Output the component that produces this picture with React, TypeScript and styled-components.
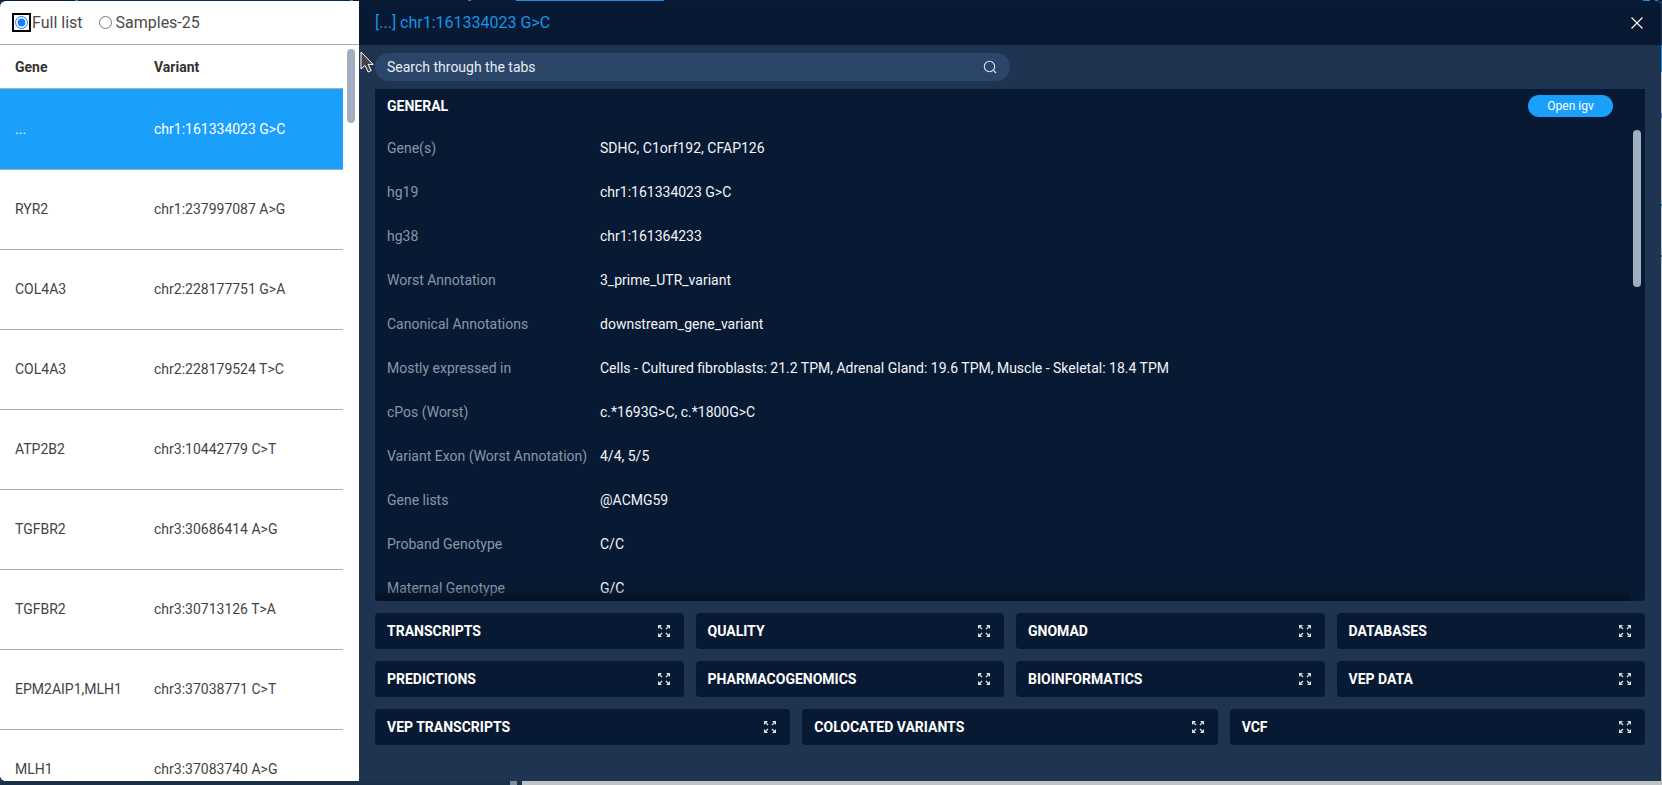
import React from "react";
import styled, { createGlobalStyle } from "styled-components";

const Global = createGlobalStyle`
  html, body { margin: 0; padding: 0; height: 100%; overflow: hidden; }
  body { font-family: Roboto, "Liberation Sans", sans-serif; font-size: 14px; background: #1f3450; }
  * { box-sizing: border-box; }
`;

const Page = styled.div`
  width: 1662px;
  height: 785px;
  display: flex;
  flex-direction: column;
  overflow: hidden;
  position: relative;
`;

const TopStrip = styled.div`
  height: 1px;
  flex: none;
  background: linear-gradient(
    to right,
    #0a1c36 0 75px, #1a8fe0 75px 78px, #0d2a4c 78px 350px, #1a8fe0 350px 353px, #0a1c36 353px 468px,
    #1a8fe0 468px 471px, #0a1c36 471px 516px, #1a8fe0 516px 664px, #0a1c36 664px 1643px,
    #1a8fe0 1643px 1650px, #0a1c36 1650px 1655px, #1a8fe0 1655px 1658px, #0a1c36 1658px 100%
  );
`;

const Middle = styled.div`
  flex: 1;
  min-height: 0;
  display: flex;
`;

const RightStrip = styled.div`
  width: 1px;
  flex: none;
  background: linear-gradient(
    to bottom,
    #1f3450 0 44px, #1a8fe0 44px 71px, #c3c7cb 71px 112px, #6f86c0 112px 117px, #c3c7cb 117px 203px,
    #1a8fe0 203px 205px, #c3c7cb 205px 254px, #1a8fe0 254px 256px, #c3c7cb 256px 100%
  );
`;

const BottomStrip = styled.div`
  height: 4px;
  flex: none;
  display: flex;
`;

const BottomDark = styled.div`
  width: 510px;
  background: #1b3049;
`;
const BottomMid = styled.div`
  width: 7px;
  background: #7f8d9e;
`;
const BottomGap = styled.div`
  width: 5px;
  background: #1b3049;
`;
const BottomLight = styled.div`
  flex: 1;
  background: #bfc3c6;
`;

const Modal = styled.div`
  flex: 1;
  min-width: 0;
  display: flex;
  border-radius: 6px;
  overflow: hidden;
`;

const ListPanel = styled.aside`
  width: 359px;
  flex: none;
  background: #ffffff;
  display: flex;
  flex-direction: column;
`;

const ListModes = styled.div`
  height: 44px;
  flex: none;
  display: flex;
  align-items: center;
  gap: 16px;
  padding-left: 15px;
  border-bottom: 1px solid #a0afbf;
  color: #4a4a4a;
  font-size: 16px;
`;

const ModeLabel = styled.label`
  display: flex;
  align-items: center;
  gap: 4px;
`;

const ModeRadio = styled.input<{ $focused?: boolean }>`
  width: 13px;
  height: 13px;
  margin: 0;
  accent-color: #1a7bff;
  outline: ${(p) => (p.$focused ? "2px solid #000" : "none")};
  outline-offset: 1px;
  border-radius: 6px;
`;

const ListBody = styled.div`
  flex: 1;
  min-height: 0;
  position: relative;
  overflow: hidden;
`;

const ListTable = styled.div`
  width: 343px;
`;

const ListHead = styled.div`
  height: 44px;
  display: grid;
  grid-template-columns: 139px 1fr;
  align-items: center;
  padding-left: 15px;
  font-weight: 700;
  color: #333;
  border-bottom: 1px solid #a0afbf;
`;

const ListRow = styled.div<{ $active?: boolean }>`
  height: ${(p) => (p.$active ? "81px" : "80px")};
  display: grid;
  grid-template-columns: 139px 1fr;
  align-items: center;
  padding: 0 0 ${(p) => (p.$active ? "1px" : "2px")} 15px;
  color: ${(p) => (p.$active ? "#ffffff" : "#444")};
  background: ${(p) => (p.$active ? "#1aa0fb" : "#fff")};
  border-bottom: 1px solid #a0afbf;
`;

const ListThumb = styled.div`
  position: absolute;
  top: 4px;
  left: 347px;
  width: 8px;
  height: 74px;
  border-radius: 4px;
  background: #a0afbf;
`;

const DetailPanel = styled.section`
  flex: 1;
  min-width: 0;
  display: flex;
  flex-direction: column;
  background: #1f3450;
  position: relative;
`;

const DetailHeader = styled.header`
  height: 44px;
  flex: none;
  background: #081a33;
  display: flex;
  align-items: center;
  justify-content: space-between;
  padding: 0 18px 1px 16px;
`;

const DetailTitle = styled.div`
  color: #1a93ea;
  font-size: 16px;
`;

const CloseIcon = styled.svg`
  width: 12px;
  height: 12px;
  display: block;
`;

const DetailBody = styled.div`
  flex: 1;
  min-height: 0;
  display: flex;
  flex-direction: column;
  padding: 8px 16px 36px;
`;

const SearchPill = styled.div`
  width: 635px;
  height: 28px;
  flex: none;
  border-radius: 14px;
  background: #2c4669;
  display: flex;
  align-items: center;
  justify-content: space-between;
  padding: 0 13px 0 12px;
  color: #e6edf5;
`;

const SearchIcon = styled.svg`
  width: 14px;
  height: 14px;
  display: block;
`;

const GeneralCard = styled.div`
  height: 512px;
  flex: none;
  margin-top: 8px;
  background: #081a33;
  border-radius: 0 0 4px 4px;
  display: flex;
  flex-direction: column;
  overflow: hidden;
  position: relative;
`;

const GeneralHead = styled.div`
  height: 34px;
  flex: none;
  margin-bottom: 3px;
  display: flex;
  align-items: center;
  justify-content: space-between;
  padding: 0 32px 0 12px;
`;

const SectionName = styled.div`
  color: #fff;
  font-weight: 700;
`;

const OpenButton = styled.button`
  width: 85px;
  height: 22px;
  border: 0;
  border-radius: 11px;
  background: #1aa0fb;
  color: #fff;
  font-family: inherit;
  font-size: 12px;
  padding: 0;
`;

const GeneralRows = styled.div`
  flex: 1;
  min-height: 0;
  overflow: hidden;
  padding-left: 12px;
`;

const InfoRow = styled.div`
  height: 44px;
  display: grid;
  grid-template-columns: 213px 1fr;
  align-items: center;
`;

const InfoLabel = styled.div`
  color: #8996a8;
`;

const InfoValue = styled.div`
  color: #f2f5f8;
`;

const CardThumb = styled.div`
  position: absolute;
  top: 41px;
  right: 4px;
  width: 8px;
  height: 157px;
  border-radius: 4px;
  background: #a0afbf;
`;

const CardFade = styled.div`
  position: absolute;
  left: 0;
  bottom: 0;
  width: 1254px;
  height: 14px;
  background: linear-gradient(to bottom, rgba(6, 15, 28, 0), rgba(6, 15, 28, 0.7));
`;

const SectionGrid = styled.div<{ $cols: number }>`
  display: grid;
  grid-template-columns: repeat(${(p) => p.$cols}, 1fr);
  gap: 12px;
  margin-top: 12px;
`;

const SectionCard = styled.div`
  height: 36px;
  background: #081a33;
  border-radius: 4px;
  display: flex;
  align-items: center;
  justify-content: space-between;
  padding: 0 14px 0 12px;
`;

const ExpandIcon = styled.svg`
  width: 12px;
  height: 12px;
  display: block;
`;

const Cursor = styled.svg`
  position: absolute;
  left: 1px;
  top: 50px;
  width: 14px;
  height: 23px;
`;

const Expand = () => (
  <ExpandIcon viewBox="0 0 12 12">
    <g fill="#dfe4ea">
      <path d="M0 0h4L0 4z" />
      <path d="M12 0H8l4 4z" />
      <path d="M0 12h4l-4-4z" />
      <path d="M12 12H8l4-4z" />
    </g>
    <g stroke="#dfe4ea" strokeWidth="1.2">
      <path d="M2 2l2 2M10 2L8 4M2 10l2-2M10 10L8 8" />
    </g>
  </ExpandIcon>
);

const variants: [string, string][] = [
  ["...", "chr1:161334023 G>C"],
  ["RYR2", "chr1:237997087 A>G"],
  ["COL4A3", "chr2:228177751 G>A"],
  ["COL4A3", "chr2:228179524 T>C"],
  ["ATP2B2", "chr3:10442779 C>T"],
  ["TGFBR2", "chr3:30686414 A>G"],
  ["TGFBR2", "chr3:30713126 T>A"],
  ["EPM2AIP1,MLH1", "chr3:37038771 C>T"],
  ["MLH1", "chr3:37083740 A>G"],
];

const info: [string, string][] = [
  ["Gene(s)", "SDHC, C1orf192, CFAP126"],
  ["hg19", "chr1:161334023 G>C"],
  ["hg38", "chr1:161364233"],
  ["Worst Annotation", "3_prime_UTR_variant"],
  ["Canonical Annotations", "downstream_gene_variant"],
  ["Mostly expressed in", "Cells - Cultured fibroblasts: 21.2 TPM, Adrenal Gland: 19.6 TPM, Muscle - Skeletal: 18.4 TPM"],
  ["cPos (Worst)", "c.*1693G>C, c.*1800G>C"],
  ["Variant Exon (Worst Annotation)", "4/4, 5/5"],
  ["Gene lists", "@ACMG59"],
  ["Proband Genotype", "C/C"],
  ["Maternal Genotype", "G/C"],
];

const gridA = ["TRANSCRIPTS", "QUALITY", "GNOMAD", "DATABASES", "PREDICTIONS", "PHARMACOGENOMICS", "BIOINFORMATICS", "VEP DATA"];
const gridB = ["VEP TRANSCRIPTS", "COLOCATED VARIANTS", "VCF"];

export default function App() {
  return (
    <Page>
      <Global />
      <TopStrip />
      <Middle>
        <Modal>
          <ListPanel>
            <ListModes>
              <ModeLabel>
                <ModeRadio type="radio" name="mode" defaultChecked $focused />
                Full list
              </ModeLabel>
              <ModeLabel>
                <ModeRadio type="radio" name="mode" />
                Samples-25
              </ModeLabel>
            </ListModes>
            <ListBody>
              <ListTable>
                <ListHead>
                  <div>Gene</div>
                  <div>Variant</div>
                </ListHead>
                {variants.map(([g, v], i) => (
                  <ListRow key={v} $active={i === 0}>
                    <div>{g}</div>
                    <div>{v}</div>
                  </ListRow>
                ))}
              </ListTable>
              <ListThumb />
            </ListBody>
          </ListPanel>
          <DetailPanel>
            <DetailHeader>
              <DetailTitle>[...] chr1:161334023 G&gt;C</DetailTitle>
              <CloseIcon viewBox="0 0 12 12">
                <path d="M0.5 0.5l11 11M11.5 0.5l-11 11" stroke="#fff" strokeWidth="1.1" fill="none" />
              </CloseIcon>
            </DetailHeader>
            <DetailBody>
              <SearchPill>
                <span>Search through the tabs</span>
                <SearchIcon viewBox="0 0 14 14">
                  <circle cx="6.5" cy="6.5" r="5.2" fill="none" stroke="#dfe6ee" strokeWidth="1.1" />
                  <path d="M10.4 10.4l2.6 2.6" stroke="#dfe6ee" strokeWidth="1.2" fill="none" />
                </SearchIcon>
              </SearchPill>
              <GeneralCard>
                <GeneralHead>
                  <SectionName>GENERAL</SectionName>
                  <OpenButton>Open igv</OpenButton>
                </GeneralHead>
                <GeneralRows>
                  {info.map(([l, v]) => (
                    <InfoRow key={l}>
                      <InfoLabel>{l}</InfoLabel>
                      <InfoValue>{v}</InfoValue>
                    </InfoRow>
                  ))}
                </GeneralRows>
                <CardThumb />
                <CardFade />
              </GeneralCard>
              <SectionGrid $cols={4}>
                {gridA.map((s) => (
                  <SectionCard key={s}>
                    <SectionName>{s}</SectionName>
                    <Expand />
                  </SectionCard>
                ))}
              </SectionGrid>
              <SectionGrid $cols={3}>
                {gridB.map((s) => (
                  <SectionCard key={s}>
                    <SectionName>{s}</SectionName>
                    <Expand />
                  </SectionCard>
                ))}
              </SectionGrid>
            </DetailBody>
            <Cursor viewBox="0 0 14 23">
              <path d="M1 1v17l4-3.5 3.2 6.5 3-1.4-3-6.2h5z" fill="#444" stroke="#fff" strokeWidth="1" />
            </Cursor>
          </DetailPanel>
        </Modal>
        <RightStrip />
      </Middle>
      <BottomStrip>
        <BottomDark />
        <BottomMid />
        <BottomGap />
        <BottomLight />
      </BottomStrip>
    </Page>
  );
}
